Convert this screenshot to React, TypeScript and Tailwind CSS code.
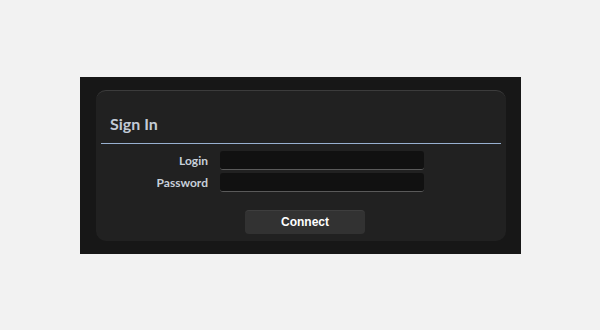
import React, { useState } from 'react';

export default function App() {
  const [login, setLogin] = useState('');
  const [password, setPassword] = useState('');

  return (
    <div className="min-h-[330px] w-full bg-[#f2f2f2] pt-[77px]">
      <div className="ml-[80px] w-[441px] bg-[#171717] px-[16px] pt-[13px] pb-[13px]">
        <div className="w-[410px] rounded-[10px] border-t border-[#3c3c3c] bg-[#212121] pb-[7px]">
          <h2 className="pl-[14px] pt-[23px] pb-[9px] text-[16px] font-bold leading-[20px] text-[#c3cbd6] [font-family:Lato,'Open_Sans',sans-serif]">
            Sign In
          </h2>
          <div className="mx-[5px] h-px bg-[#98b0d0]" />

          <div className="mt-[7px] grid grid-cols-[112px_204px] gap-x-[12px] gap-y-[3px] [font-family:Lato,'Open_Sans',sans-serif]">
            <label className="text-right text-[12px] font-bold leading-[19px] text-[#c8d0da]">Login</label>
            <input
              className="h-[19px] rounded-[3px] border-b border-[#5a5a5a] bg-[#111111] px-1 text-[12px] text-white outline-none"
              value={login}
              onChange={(e) => setLogin(e.target.value)}
            />
            <label className="text-right text-[12px] font-bold leading-[19px] text-[#c8d0da]">Password</label>
            <input
              type="password"
              className="h-[19px] rounded-[3px] border-b border-[#5a5a5a] bg-[#111111] px-1 text-[12px] text-white outline-none"
              value={password}
              onChange={(e) => setPassword(e.target.value)}
            />
          </div>

          <div className="mt-[16px] pl-[149px]">
            <button
              type="button"
              className="h-[24px] w-[120px] rounded-[4px] border-t border-[#3e3e3e] bg-[#323232] text-[12px] font-bold text-white [font-family:'Liberation_Sans',Arial,sans-serif]"
            >
              Connect
            </button>
          </div>
        </div>
      </div>
    </div>
  );
}
